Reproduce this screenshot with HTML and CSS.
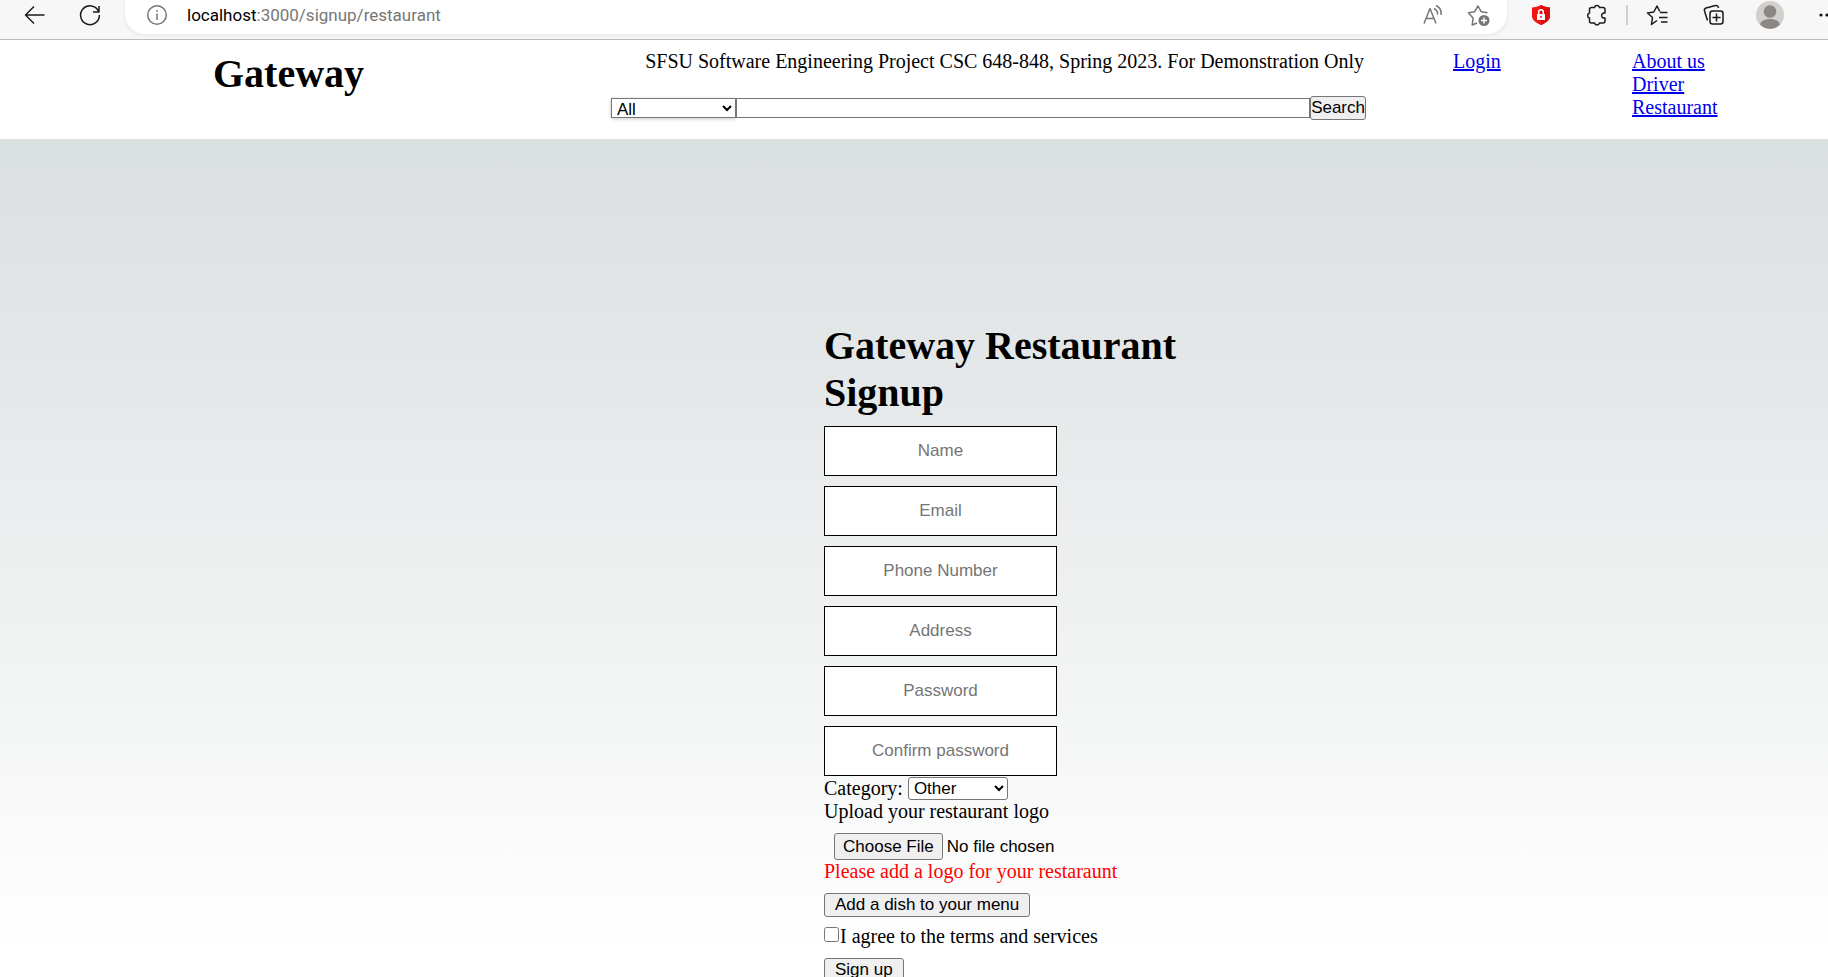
FILE: index.html
```html
<!DOCTYPE html>
<html lang="en">
<head>
<meta charset="utf-8">
<title>Gateway Restaurant Signup</title>
<link rel="stylesheet" href="styles.css">
</head>
<body>
<div class="toolbar">
  <button class="tool back" aria-label="Back"><svg width="24" height="24" viewBox="0 0 24 24"><path d="M21.500 12H3M11 3.500 2.500 12l8.500 8.500"/></svg></button>
  <button class="tool reload" aria-label="Refresh"><svg width="24" height="24" viewBox="0 0 24 24"><path d="M20.500 8.200A9.400 9.400 0 1 0 21.400 12M21 3v6h-6"/></svg></button>
  <div class="address">
    <svg class="grey" width="24" height="24" viewBox="0 0 24 24"><circle cx="12" cy="12" r="9.300"/><path d="M12 10.500v6.500M12 7v1.800"/></svg>
    <span class="url"><b>localhost</b>:3000/signup/restaurant</span>
    <button class="tool read" aria-label="Read aloud"><svg class="grey" width="24" height="24" viewBox="0 0 24 24"><path d="M3 20.500 9 5.500l6 15M5 15.500h8M13 5.500a6 6 0 0 1 3.500 6M15 2.500a9 9 0 0 1 5 9.500"/></svg></button>
    <button class="tool" aria-label="Add to favorites"><svg class="grey" width="24" height="24" viewBox="0 0 24 24"><path d="M10 20 5.200 22l.9-6.800L1.500 9.800l6.200-1.100L11 3l3.200 5.700 6.300 1.100"/><circle class="solid" cx="17" cy="17.500" r="5.500"/><path class="white" d="M14 17.500h6M17 14.500v6"/></svg></button>
  </div>
  <button class="tool shield" aria-label="Ad blocker"><svg width="24" height="24" viewBox="0 0 24 24"><path fill="#f51414" stroke="none" d="M12 2c3 1.500 6 2.500 9 2.500V13c0 4-4 7-9 9-5-2-9-5-9-9V4.500C6 4.500 9 3.500 12 2z"/><path fill="#d90d0d" stroke="none" d="M12 2c3 1.500 6 2.500 9 2.500V13c0 4-4 7-9 9z"/><rect x="8" y="11" width="8" height="6" fill="#fff" stroke="none"/><path class="white" d="M9.700 11V9a2.300 2.300 0 0 1 4.600 0v2"/><path stroke="#f51414" d="M12 13v2"/></svg></button>
  <button class="tool puzzle" aria-label="Extensions"><svg width="24" height="24" viewBox="0 0 24 24"><path d="M6.500 4.500h3a2.600 2.600 0 0 1 5 0h3.500a2 2 0 0 1 2 2V10h-1.500a2.600 2.600 0 0 0 0 5H20v3a2 2 0 0 1-2 2h-3.500a2.600 2.600 0 0 1-5 0h-3a2 2 0 0 1-2-2v-3a2.600 2.600 0 0 1 0-5V6.500a2 2 0 0 1 2-2z"/></svg></button>
  <span class="divider"></span>
  <button class="tool" aria-label="Favorites"><svg width="24" height="24" viewBox="0 0 24 24"><path d="M11 17.500 5.500 21.500l1-7L1.500 10l6.300-1L11 3l2.800 5.500M14 9.500h7.500M13 14.500h8.500M15 19h6.500"/></svg></button>
  <button class="tool" aria-label="Collections"><svg width="24" height="24" viewBox="0 0 24 24"><rect x="8" y="8" width="13" height="13" rx="2.500"/><path d="M14.500 10.500v8M10.500 14.500h8M5.500 17.500 2.500 8A2.500 2.500 0 0 1 4 5l9.500-2.500a2.500 2.500 0 0 1 3 2.500"/></svg></button>
  <button class="tool" aria-label="Profile"><svg class="avatar" width="28" height="28" viewBox="0 0 28 28"><circle cx="14" cy="14" r="14" fill="#d2d0cd"/><circle cx="14" cy="10.500" r="6.300" fill="#8b8784"/><path fill="#8b8784" d="M4 23.500c1-4 5.500-5.500 10-5.500s9 1.500 10 5.500a14 14 0 0 1-20 0z"/></svg></button>
  <button class="tool more" aria-label="More"><svg class="dots" width="24" height="24" viewBox="0 0 24 24"><circle cx="4" cy="12" r="1.600"/><circle cx="10" cy="12" r="1.600"/><circle cx="16" cy="12" r="1.600"/></svg></button>
</div>
<header class="site-header">
  <h1 class="brand">Gateway</h1>
  <div class="middle">
    <p class="notice">SFSU Software Engineering Project CSC 648-848, Spring 2023. For Demonstration Only</p>
    <form class="search">
      <select class="search-kind" aria-label="Search category"><option>All</option></select>
      <input class="search-text" type="text" aria-label="Search text">
      <button class="button search-button" type="button">Search</button>
    </form>
  </div>
  <nav class="login"><a href="#">Login</a></nav>
  <nav class="links"><a href="#">About us</a><a href="#">Driver</a><a href="#">Restaurant</a></nav>
</header>
<main class="page">
  <form class="signup">
    <h1 class="title">Gateway Restaurant Signup</h1>
    <div class="fields">
      <input class="field" type="text" placeholder="Name" aria-label="Name">
      <input class="field" type="email" placeholder="Email" aria-label="Email">
      <input class="field" type="tel" placeholder="Phone Number" aria-label="Phone Number">
      <input class="field" type="text" placeholder="Address" aria-label="Address">
      <input class="field" type="password" placeholder="Password" aria-label="Password">
      <input class="field" type="password" placeholder="Confirm password" aria-label="Confirm password">
    </div>
    <div class="category"><label for="category">Category:</label><select id="category" class="category-select"><option>Other</option></select></div>
    <label for="logo">Upload your restaurant logo</label>
    <input id="logo" class="file" type="file">
    <p class="error">Please add a logo for your restaraunt</p>
    <button class="button dish" type="button">Add a dish to your menu</button>
    <div class="terms"><input id="terms" class="check" type="checkbox"><label for="terms">I agree to the terms and services</label></div>
    <button class="button submit" type="submit">Sign up</button>
  </form>
</main>
</body>
</html>
```

FILE: styles.css
```css
* { box-sizing: border-box; }
html { height: 100%; }
body {
  margin: 0;
  height: 100%;
  display: flex;
  flex-direction: column;
  overflow: hidden;
  font: 20px/23px "Liberation Serif", "Times New Roman", serif;
  color: #000;
}
h1, p { margin: 0; }
h1 { font-size: 40px; line-height: 47px; }
a { color: #00e; }
input, select, button { font: 17px/20px "Liberation Sans", Arial, sans-serif; color: #000; margin: 0; }

.toolbar {
  flex: none;
  display: flex;
  align-items: flex-start;
  height: 40px;
  background: #f7f7f7;
  border-bottom: 1px solid #b9bcbc;
}
.tool {
  flex: none;
  display: flex;
  align-items: center;
  justify-content: center;
  width: 56px;
  height: 30px;
  padding: 0;
  border: 0;
  background: none;
}
.toolbar svg { flex: none; fill: none; stroke: #1b1b1b; stroke-width: 1.5; stroke-linejoin: round; }
.toolbar svg.avatar { stroke: none; }
.toolbar svg.dots { stroke: none; fill: #111; }
.toolbar svg.grey { stroke: #767676; }
.toolbar .solid { fill: #767676; stroke: none; }
.toolbar .white { stroke: #fff; }
.back { margin-left: 7px; }
.reload { width: 54px; }
.address {
  flex: 1;
  display: flex;
  align-items: center;
  height: 34px;
  margin-left: 8px;
  padding: 0 3px 4px 20px;
  background: #fff;
  border-radius: 0 0 20px 20px;
  box-shadow: 0 1px 4px #e4e4e4;
}
.url { flex: 1; margin-left: 18px; font: 17px/24px Roboto, "Open Sans", sans-serif; color: #767676; }
.url b { font-weight: 400; color: #000; }
.read { width: 42px; }
.address .tool:last-child { width: 50px; }
.divider { width: 2px; height: 20px; margin: 5px 2px 0 1px; background: #cfcfcf; }
.shield { margin-left: 6px; }
.more { width: 30px; overflow: hidden; justify-content: flex-start; padding-left: 19px; }

.site-header {
  flex: none;
  display: grid;
  grid-template-columns: 577fr 789fr 87fr 179fr 196fr;
  padding: 10px 0 19px;
  background: #fff;
}
.brand { text-align: center; }
.middle { display: flex; flex-direction: column; gap: 23px; align-items: flex-end; }
.notice { white-space: nowrap; padding-right: 2px; }
.search { display: flex; align-items: center; align-self: stretch; margin-left: 34px; }
.search-kind {
  width: 125px;
  height: 20px;
  padding: 0 0 0 1px;
  border: 1px solid #767676;
  border-radius: 0;
  background: #fff;
  line-height: 18px;
  box-shadow: 0 1px 4px #ccc;
}
.search-text { flex: 1; min-width: 0; height: 20px; border: 1px solid #767676; padding: 0 2px; }
.button { border: 1px solid #767676; border-radius: 3px; background: #efefef; padding: 1px; }
.search-button { height: 24px; padding: 1px 0; }
.login { grid-column: 4; }
.links { display: flex; flex-direction: column; align-items: flex-start; }

.page {
  flex: 1;
  min-height: 0;
  display: flex;
  justify-content: center;
  padding-top: 183px;
  background: linear-gradient(#dadfdf, #ebedee 45%, #f5f7f6 72%, #fff 97%);
}
.signup { display: flex; flex-direction: column; align-items: flex-start; width: 400px; margin-left: 220px; }
.title { margin-bottom: 10px; }
.fields { display: flex; flex-direction: column; gap: 10px; }
.field { width: 233px; height: 50px; padding: 0 10px; border: 1px solid #000; text-align: center; background: #fff; }
.field::placeholder { color: #757575; opacity: 1; }
.category { display: flex; align-items: center; gap: 5px; margin-top: 1px; }
.category-select { width: 100px; height: 23px; padding: 0 0 0 1px; border: 1px solid #767676; border-radius: 3px; background: #fff; }
.file { margin: 10px 0 0 10px; }
.file::file-selector-button {
  font: inherit;
  height: 27px;
  margin-right: 4px;
  padding: 1px 8px;
  border: 1px solid #767676;
  border-radius: 3px;
  background: #efefef;
}
.error { color: #f00; }
.dish { height: 24px; margin-top: 10px; padding: 1px 10px; }
.terms { display: flex; align-items: flex-start; margin-top: 8px; }
.check { width: 15px; height: 15px; margin: 2px 1px 0 0; }
.submit { height: 24px; margin-top: 10px; padding: 1px 10px; }
```
